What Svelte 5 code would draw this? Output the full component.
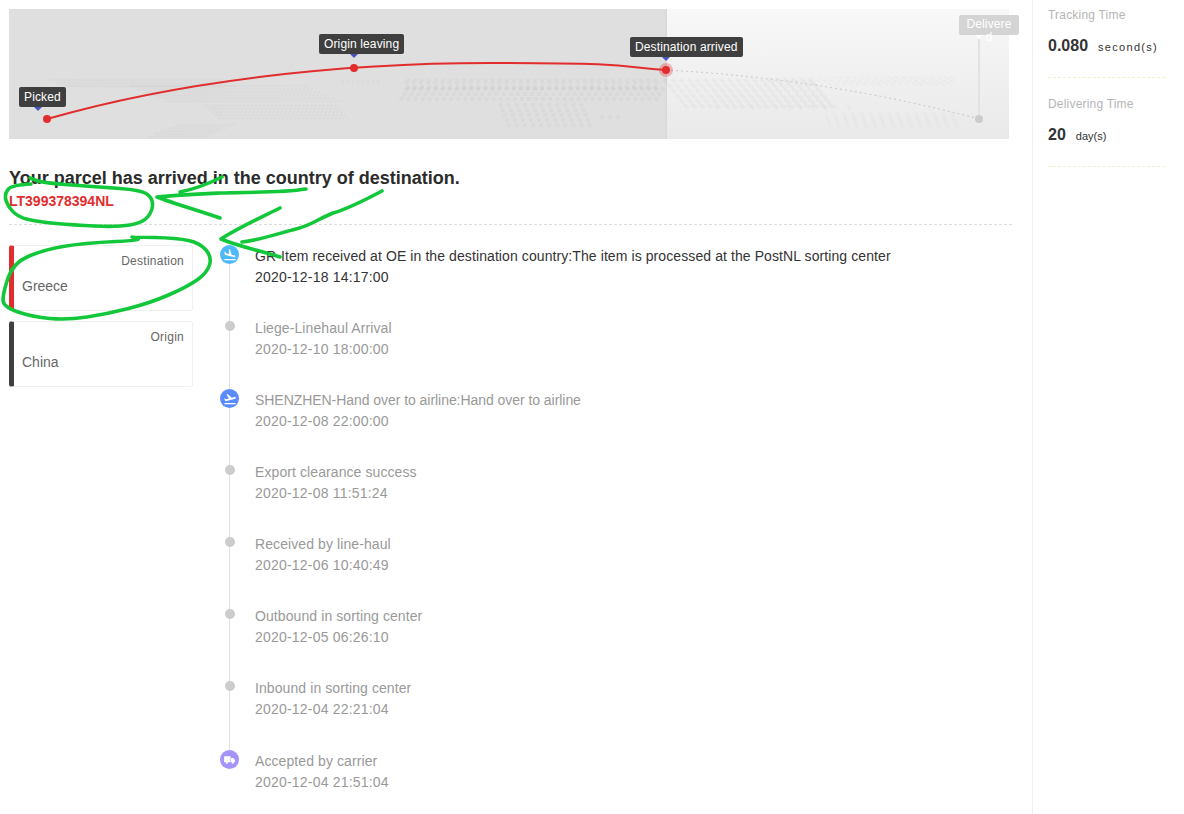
<script>
	const tips = [
		{ label: 'Picked', left: 10, top: 78, pin: 25, off: false },
		{ label: 'Origin leaving', left: 310, top: 25, pin: 341, off: false },
		{ label: 'Destination arrived', left: 621, top: 28, pin: 653, off: false },
		{ label: 'Delivered', left: 950, top: 6, pin: 966, off: true }
	];

	const events = [
		{ text: 'GR-Item received at OE in the destination country:The item is processed at the PostNL sorting center', time: '2020-12-18 14:17:00', icon: 'land' },
		{ text: 'Liege-Linehaul Arrival', time: '2020-12-10 18:00:00' },
		{ text: 'SHENZHEN-Hand over to airline:Hand over to airline', time: '2020-12-08 22:00:00', icon: 'takeoff', tight: true },
		{ text: 'Export clearance success', time: '2020-12-08 11:51:24' },
		{ text: 'Received by line-haul', time: '2020-12-06 10:40:49' },
		{ text: 'Outbound in sorting center', time: '2020-12-05 06:26:10' },
		{ text: 'Inbound in sorting center', time: '2020-12-04 22:21:04' },
		{ text: 'Accepted by carrier', time: '2020-12-04 21:51:04', icon: 'truck' }
	];

	// blobs of the dotted world map, in banner coordinates: x0, x1, y0, y1, shift per row, column step, row step
	const blobs = [
		[45, 215, 70, 78, 7, 4, 3],
		[125, 300, 76, 94, 7, 4, 3],
		[200, 330, 96, 110, 3, -4, 3],
		[170, 230, 115, 130, -7, 4, 3],
		[335, 375, 71, 75, 0, 5, 3],
		[400, 650, 70, 78, 0, 7, 6],
		[400, 655, 78, 92, -3, 7, 5],
		[492, 575, 94, 115, 2, 8, 5],
		[592, 612, 106, 111, 0, 8, 5],
		[655, 800, 70, 96, 4, 8, 5],
		[760, 945, 68, 75, -2, 7, 3],
		[705, 840, 96, 102, 2, 12, 3],
		[815, 950, 104, 118, 1, 9, 3]
	];

	const dashes = [];
	for (const [x0, x1, y0, y1, shift, cx, row] of blobs) {
		const step = Math.abs(cx);
		let r = 0;
		for (let y = y0; y < y1; y += row) {
			for (let x = x0 + r * shift; x < x1 + r * shift; x += step) {
				// dashes lean away from the vanishing point in the middle of the map
				const lean = (x - 521) / 170;
				const h = row - 1;
				dashes.push({ x1: x, y1: y, x2: x + lean * h, y2: y + h, w: row > 3 ? 4 : 2, o: row > 3 ? 0.024 : 0.02 });
			}
			r++;
		}
	}

	// smooth line through hand picked points
	const smooth = (pts) => {
		let d = `M${pts[0][0]} ${pts[0][1]}`;
		for (let i = 1; i < pts.length - 1; i++) {
			const mx = (pts[i][0] + pts[i + 1][0]) / 2;
			const my = (pts[i][1] + pts[i + 1][1]) / 2;
			d += `Q${pts[i][0]} ${pts[i][1]} ${mx} ${my}`;
		}
		const last = pts[pts.length - 1];
		return d + `L${last[0]} ${last[1]}`;
	};

	const loopCode = smooth([[31, 184], [12, 185], [5, 193], [6, 203], [17, 217], [40, 222], [73, 225], [117, 227], [143, 223], [153, 210], [152, 197], [140, 190], [100, 187], [43, 183], [30, 178]]);
	const loopCard = smooth([[132, 237], [150, 240], [83, 243], [43, 250], [13, 263], [3, 293], [3, 307], [33, 317], [67, 320], [107, 314], [150, 303], [187, 287], [207, 273], [212, 257], [200, 243], [177, 238], [132, 237]]);
</script>

<div class="page">
	<div class="main">
		<div class="banner">
			<div class="passed"></div>
			<svg class="map" width="1000" height="130" viewBox="0 0 1000 130">
				{#each dashes as d}
					<line x1={d.x1} y1={d.y1} x2={d.x2} y2={d.y2} stroke="#000" stroke-opacity={d.o} stroke-width={d.w} />
				{/each}
				<path d="M970 30V110" stroke="#e2e2e2" stroke-width="2" fill="none" />
				<path d="M657 61Q820 70 970 110" stroke="#cfcfcf" stroke-width="1.2" stroke-dasharray="2 3" fill="none" />
				<path d="M38 110C170 72 330 54 481 54S610 58 657 61" stroke="#e12d2d" stroke-width="2" fill="none" />
				<circle cx="38" cy="110" r="4" fill="#e12d2d" />
				<circle cx="345" cy="59" r="4" fill="#e12d2d" />
				<circle cx="657" cy="61" r="7" fill="#e12d2d" fill-opacity="0.3" />
				<circle cx="657" cy="61" r="4" fill="#e12d2d" />
				<circle cx="970" cy="110" r="4" fill="#cccccc" />
			</svg>
			{#each tips as t}
				<span class="pin" class:off={t.off} style="left:{t.pin}px;top:{t.top + 20}px"></span>
				<div class="tip" class:off={t.off} style="left:{t.left}px;top:{t.top}px">{t.label}</div>
			{/each}
		</div>

		<h1>Your parcel has arrived in the country of destination.</h1>
		<div class="code">LT399378394NL</div>
		<div class="divider"></div>

		<div class="content">
			<div class="cards">
				<div class="card dest">
					<div class="card-label">Destination</div>
					<div class="card-name">Greece</div>
				</div>
				<div class="card">
					<div class="card-label">Origin</div>
					<div class="card-name">China</div>
				</div>
			</div>

			<div class="timeline">
				{#each events as e, i}
					<div class="row" class:current={i === 0} class:last={i === events.length - 1}>
						<div class="marker">
							{#if e.icon === 'land'}
								<span class="badge land">
									<svg width="14" height="14" viewBox="0 0 24 24" fill="#fff"><path d="M2.5 19h19v2h-19zm7.18-5.73l4.35 1.16 5.31 1.42c.8.21 1.62-.26 1.84-1.06.21-.8-.26-1.62-1.06-1.84l-5.31-1.42-2.76-9.02L10.12 2v8.28L5.15 8.95l-.93-2.32-1.45-.39v5.17l1.6.43 5.31 1.43z" /></svg>
								</span>
							{:else if e.icon === 'takeoff'}
								<span class="badge takeoff">
									<svg width="14" height="14" viewBox="0 0 24 24" fill="#fff"><path d="M2.5 19h19v2h-19zm19.57-9.36c-.21-.8-1.04-1.28-1.84-1.06L14.92 10l-6.9-6.43-1.93.51 4.14 7.17-4.97 1.33-1.97-1.54-1.45.39 1.82 3.16.77 1.33 1.6-.43 5.31-1.42 4.35-1.16L21 11.49c.81-.23 1.28-1.05 1.07-1.85z" /></svg>
								</span>
							{:else if e.icon === 'truck'}
								<span class="badge truck">
									<svg width="13" height="13" viewBox="0 0 24 24" fill="#fff"><path d="M2 6h12v11H2zM15 9h4l3 4v4h-7z" /><circle cx="7" cy="18" r="2" /><circle cx="18" cy="18" r="2" /></svg>
								</span>
							{:else}
								<span class="dot"></span>
							{/if}
						</div>
						<div class="info">
							<div class="text" class:tight={e.tight}>{e.text}</div>
							<div class="time">{e.time}</div>
						</div>
					</div>
				{/each}
			</div>
		</div>
	</div>

	<div class="side">
		<div class="stat">
			<div class="stat-title">Tracking Time</div>
			<div class="stat-value"><b>0.080</b><span class="wide">second(s)</span></div>
		</div>
		<div class="stat">
			<div class="stat-title">Delivering Time</div>
			<div class="stat-value"><b>20</b><span>day(s)</span></div>
		</div>
	</div>

	<!-- hand drawn marks on top of the screenshot -->
	<svg class="marks" width="1184" height="814" viewBox="0 0 1184 814" fill="none" stroke="#12c83a" stroke-width="3.6" stroke-linecap="round" stroke-linejoin="round">
		<path d={loopCode} />
		<path d="M306 189C280 193 250 192 220 193C198 194 175 195 157 197C175 204 200 211 220 218M222 177C208 184 195 189 180 192" />
		<path d="M382 191C365 200 348 209 333 213C320 218 310 226 296 229C280 233 260 240 242 242M280 208C260 218 238 228 221 239C240 247 262 251 280 257" />
		<path d={loopCard} />
	</svg>
</div>

<style>
	:global(body) {
		margin: 0;
		background: #fff;
	}

	.page {
		position: relative;
		display: flex;
		width: 1184px;
		height: 814px;
		overflow: hidden;
		font-family: 'Liberation Sans', Arial, sans-serif;
		font-size: 14px;
		color: #333;
	}

	.main {
		box-sizing: border-box;
		width: 1033px;
		padding: 9px 0 0 9px;
		border-right: 1px solid #f0f0f0;
	}

	.banner {
		position: relative;
		width: 1000px;
		height: 130px;
		background: linear-gradient(#f8f8f8, #e9e9e9);
	}

	.passed {
		position: absolute;
		left: 0;
		top: 0;
		bottom: 0;
		width: 658px;
		background: #dfdfdf;
		box-shadow: inset -3px 0 3px -2px #d6d6d6;
	}

	.map {
		position: absolute;
		left: 0;
		top: 0;
	}

	.tip {
		position: absolute;
		box-sizing: border-box;
		height: 20px;
		padding: 0 5px;
		border-radius: 2px;
		background: #3f3f3f;
		color: #fff;
		font-size: 12px;
		line-height: 20px;
		letter-spacing: 0.13px;
		white-space: nowrap;
	}

	.tip.off {
		width: 60px;
		padding-top: 3px;
		background: #d4d4d4;
		text-align: center;
		line-height: 13px;
		white-space: normal;
		word-break: break-all;
	}

	.pin {
		position: absolute;
		width: 0;
		height: 0;
		border-left: 4px solid transparent;
		border-right: 4px solid transparent;
		border-top: 4px solid #4a55c4;
	}

	.pin.off {
		border-top-color: #fff;
	}

	h1 {
		margin: 28px 0 0;
		font-size: 18px;
		line-height: 22px;
		font-weight: 700;
		color: #2b2b2b;
	}

	.code {
		margin-top: 2px;
		font-weight: 700;
		line-height: 20px;
		color: #e12d2d;
	}

	.divider {
		width: 1003px;
		margin-top: 13px;
		border-top: 1px dashed #dcdcdc;
	}

	.content {
		display: flex;
		margin-top: 20px;
	}

	.cards {
		display: flex;
		flex-direction: column;
		gap: 10px;
		width: 184px;
		margin-right: 27px;
	}

	.card {
		box-sizing: border-box;
		height: 66px;
		padding: 7px 8px 0 8px;
		border: 1px solid #f0f0f0;
		border-left: 5px solid #3f3f3f;
		border-radius: 3px;
		color: #666;
	}

	.card.dest {
		border-left-color: #e12d2d;
	}

	.card-label {
		font-size: 12px;
		line-height: 16px;
		letter-spacing: 0.25px;
		text-align: right;
	}

	.card-name {
		margin-top: 7px;
		line-height: 20px;
	}

	.timeline {
		flex: 1;
	}

	.row {
		display: flex;
		height: 72px;
		line-height: 21px;
		color: #999;
	}

	.row.current {
		color: #333;
	}

	.row.last {
		margin-top: 1px;
	}

	.marker {
		position: relative;
		display: flex;
		justify-content: center;
		flex: none;
		width: 19px;
		height: 19px;
		margin-right: 16px;
	}

	.marker::before {
		content: '';
		position: absolute;
		left: 9px;
		top: 10px;
		width: 1px;
		height: 72px;
		background: #e0e0e0;
	}

	.row.last .marker::before {
		display: none;
	}

	.badge {
		position: relative;
		display: flex;
		align-items: center;
		justify-content: center;
		width: 19px;
		height: 19px;
		border-radius: 50%;
	}

	.land {
		background: #4fb8f8;
	}

	.takeoff {
		background: #5b8cff;
	}

	.truck {
		background: #a594f9;
	}

	.dot {
		position: relative;
		width: 10px;
		height: 10px;
		margin-top: 4px;
		border-radius: 50%;
		background: #cccccc;
	}

	.info {
		padding-top: 1px;
	}

	.text {
		letter-spacing: 0.09px;
	}

	.text.tight {
		letter-spacing: -0.05px;
	}

	.time {
		letter-spacing: 0.2px;
	}

	.side {
		flex: 1;
		padding: 7px 19px 0 15px;
	}

	.stat {
		height: 89px;
	}

	.stat-title {
		font-size: 12px;
		line-height: 16px;
		letter-spacing: 0.2px;
		color: #b5b5b5;
	}

	.stat-value {
		display: flex;
		align-items: baseline;
		height: 42px;
		margin-top: 12px;
		border-bottom: 1px dashed #eef2d4;
		line-height: 22px;
		color: #333;
	}

	.stat-value b {
		font-size: 16px;
		margin-right: 10px;
	}

	.stat-value span {
		font-size: 11px;
	}

	.stat-value .wide {
		letter-spacing: 1.3px;
	}

	.marks {
		position: absolute;
		left: 0;
		top: 0;
		pointer-events: none;
	}
</style>
